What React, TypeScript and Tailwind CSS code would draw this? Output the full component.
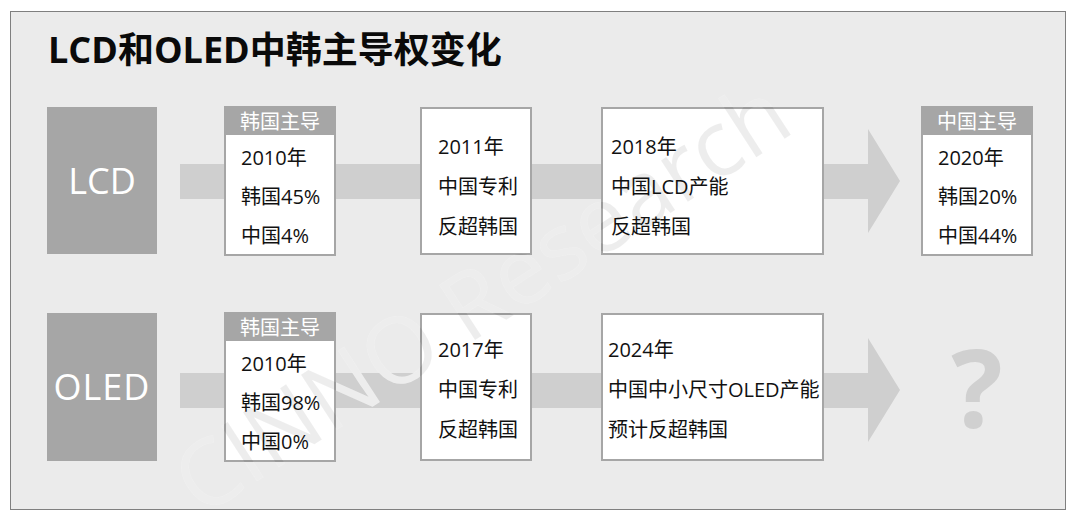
import React from "react";

function LeadBox({ title, lines }: { title: string; lines: string[] }) {
  return (
    <div className="relative z-[2] flex h-[150px] w-[112px] shrink-0 flex-col border-2 border-[#a6a6a6] bg-white">
      <div className="h-[27px] bg-[#a6a6a6] text-center text-[20px] leading-[27px] text-white">{title}</div>
      <div className="pl-[15px] pt-[3px] text-[20px] leading-[39px] text-[#111]">
        {lines.map((l) => (
          <div key={l}>{l}</div>
        ))}
      </div>
    </div>
  );
}

function TextBox({ lines, wide, pl, pt }: { lines: string[]; wide?: boolean; pl: string; pt: string }) {
  return (
    <div
      className={
        "relative z-[2] mt-[1px] h-[148px] shrink-0 border-2 border-[#a6a6a6] bg-white text-[20px] leading-[40px] text-[#111] whitespace-nowrap " +
        (wide ? "w-[223px] " : "w-[112px] ") +
        pl +
        " " +
        pt
      }
    >
      {lines.map((l) => (
        <div key={l}>{l}</div>
      ))}
    </div>
  );
}

function Arrow({ top }: { top: string }) {
  return (
    <svg
      className={"absolute left-[169px] z-0 " + top}
      width="720"
      height="104"
      viewBox="0 0 720 104"
    >
      <path d="M0 35 H688 V0 L720 52 L688 104 V70 H0 Z" fill="#cfcfcf" />
    </svg>
  );
}

function Watermark({ className }: { className: string }) {
  return (
    <div
      className={
        "pointer-events-none absolute left-[469px] top-[283px] -translate-x-1/2 -translate-y-1/2 -rotate-[33deg] whitespace-nowrap text-[92px] leading-none " +
        className
      }
    >
      CINNO Research
    </div>
  );
}

export default function App() {
  return (
    <div className="h-[522px] w-[1080px] bg-white pl-[10px] pt-[11px] font-[family-name:'Open_Sans','Noto_Sans_CJK_SC',sans-serif]">
      <div className="relative h-[499px] w-[1056px] overflow-hidden border border-[#7f7f7f] bg-[#ebebeb]">
        <Watermark className="z-[1] text-white" />
        <h1 className="ml-[37px] mt-[18px] h-[40px] text-[36px] font-bold leading-[40px] text-[#0a0a0a]">
          LCD和OLED中韩主导权变化
        </h1>

        {/* LCD row */}
        <div className="relative mt-[36px] flex h-[150px] items-start pl-[36px]">
          <Arrow top="top-[23px]" />
          <div className="relative z-[2] mt-[1px] flex h-[147px] w-[110px] shrink-0 items-center justify-center bg-[#a6a6a6] text-[36px] text-white">
            LCD
          </div>
          <div className="ml-[67px]">
            <LeadBox title="韩国主导" lines={["2010年", "韩国45%", "中国4%"]} />
          </div>
          <div className="ml-[84px]">
            <TextBox lines={["2011年", "中国专利", "反超韩国"]} pl="pl-[16px]" pt="pt-[18px]" />
          </div>
          <div className="ml-[69px]">
            <TextBox wide lines={["2018年", "中国LCD产能", "反超韩国"]} pl="pl-[8px]" pt="pt-[18px]" />
          </div>
          <div className="ml-[97px]">
            <LeadBox title="中国主导" lines={["2020年", "韩国20%", "中国44%"]} />
          </div>
        </div>

        {/* OLED row */}
        <div className="relative mt-[56px] flex h-[150px] items-start pl-[36px]">
          <Arrow top="top-[26px]" />
          <div className="relative z-[2] mt-[1px] flex h-[148px] w-[110px] shrink-0 items-center justify-center bg-[#a6a6a6] text-[36px] tracking-[1px] text-white">
            OLED
          </div>
          <div className="ml-[67px]">
            <LeadBox title="韩国主导" lines={["2010年", "韩国98%", "中国0%"]} />
          </div>
          <div className="ml-[84px]">
            <TextBox lines={["2017年", "中国专利", "反超韩国"]} pl="pl-[16px]" pt="pt-[15px]" />
          </div>
          <div className="ml-[69px]">
            <TextBox wide lines={["2024年", "中国中小尺寸OLED产能", "预计反超韩国"]} pl="pl-[5px]" pt="pt-[15px]" />
          </div>
          <div className="relative z-[2] ml-[97px] flex h-[150px] w-[112px] items-center justify-center text-[108px] font-bold leading-none text-[#d0d0d0]">
            ?
          </div>
        </div>

        <Watermark className="z-[3] text-black/[0.07]" />
      </div>
    </div>
  );
}
